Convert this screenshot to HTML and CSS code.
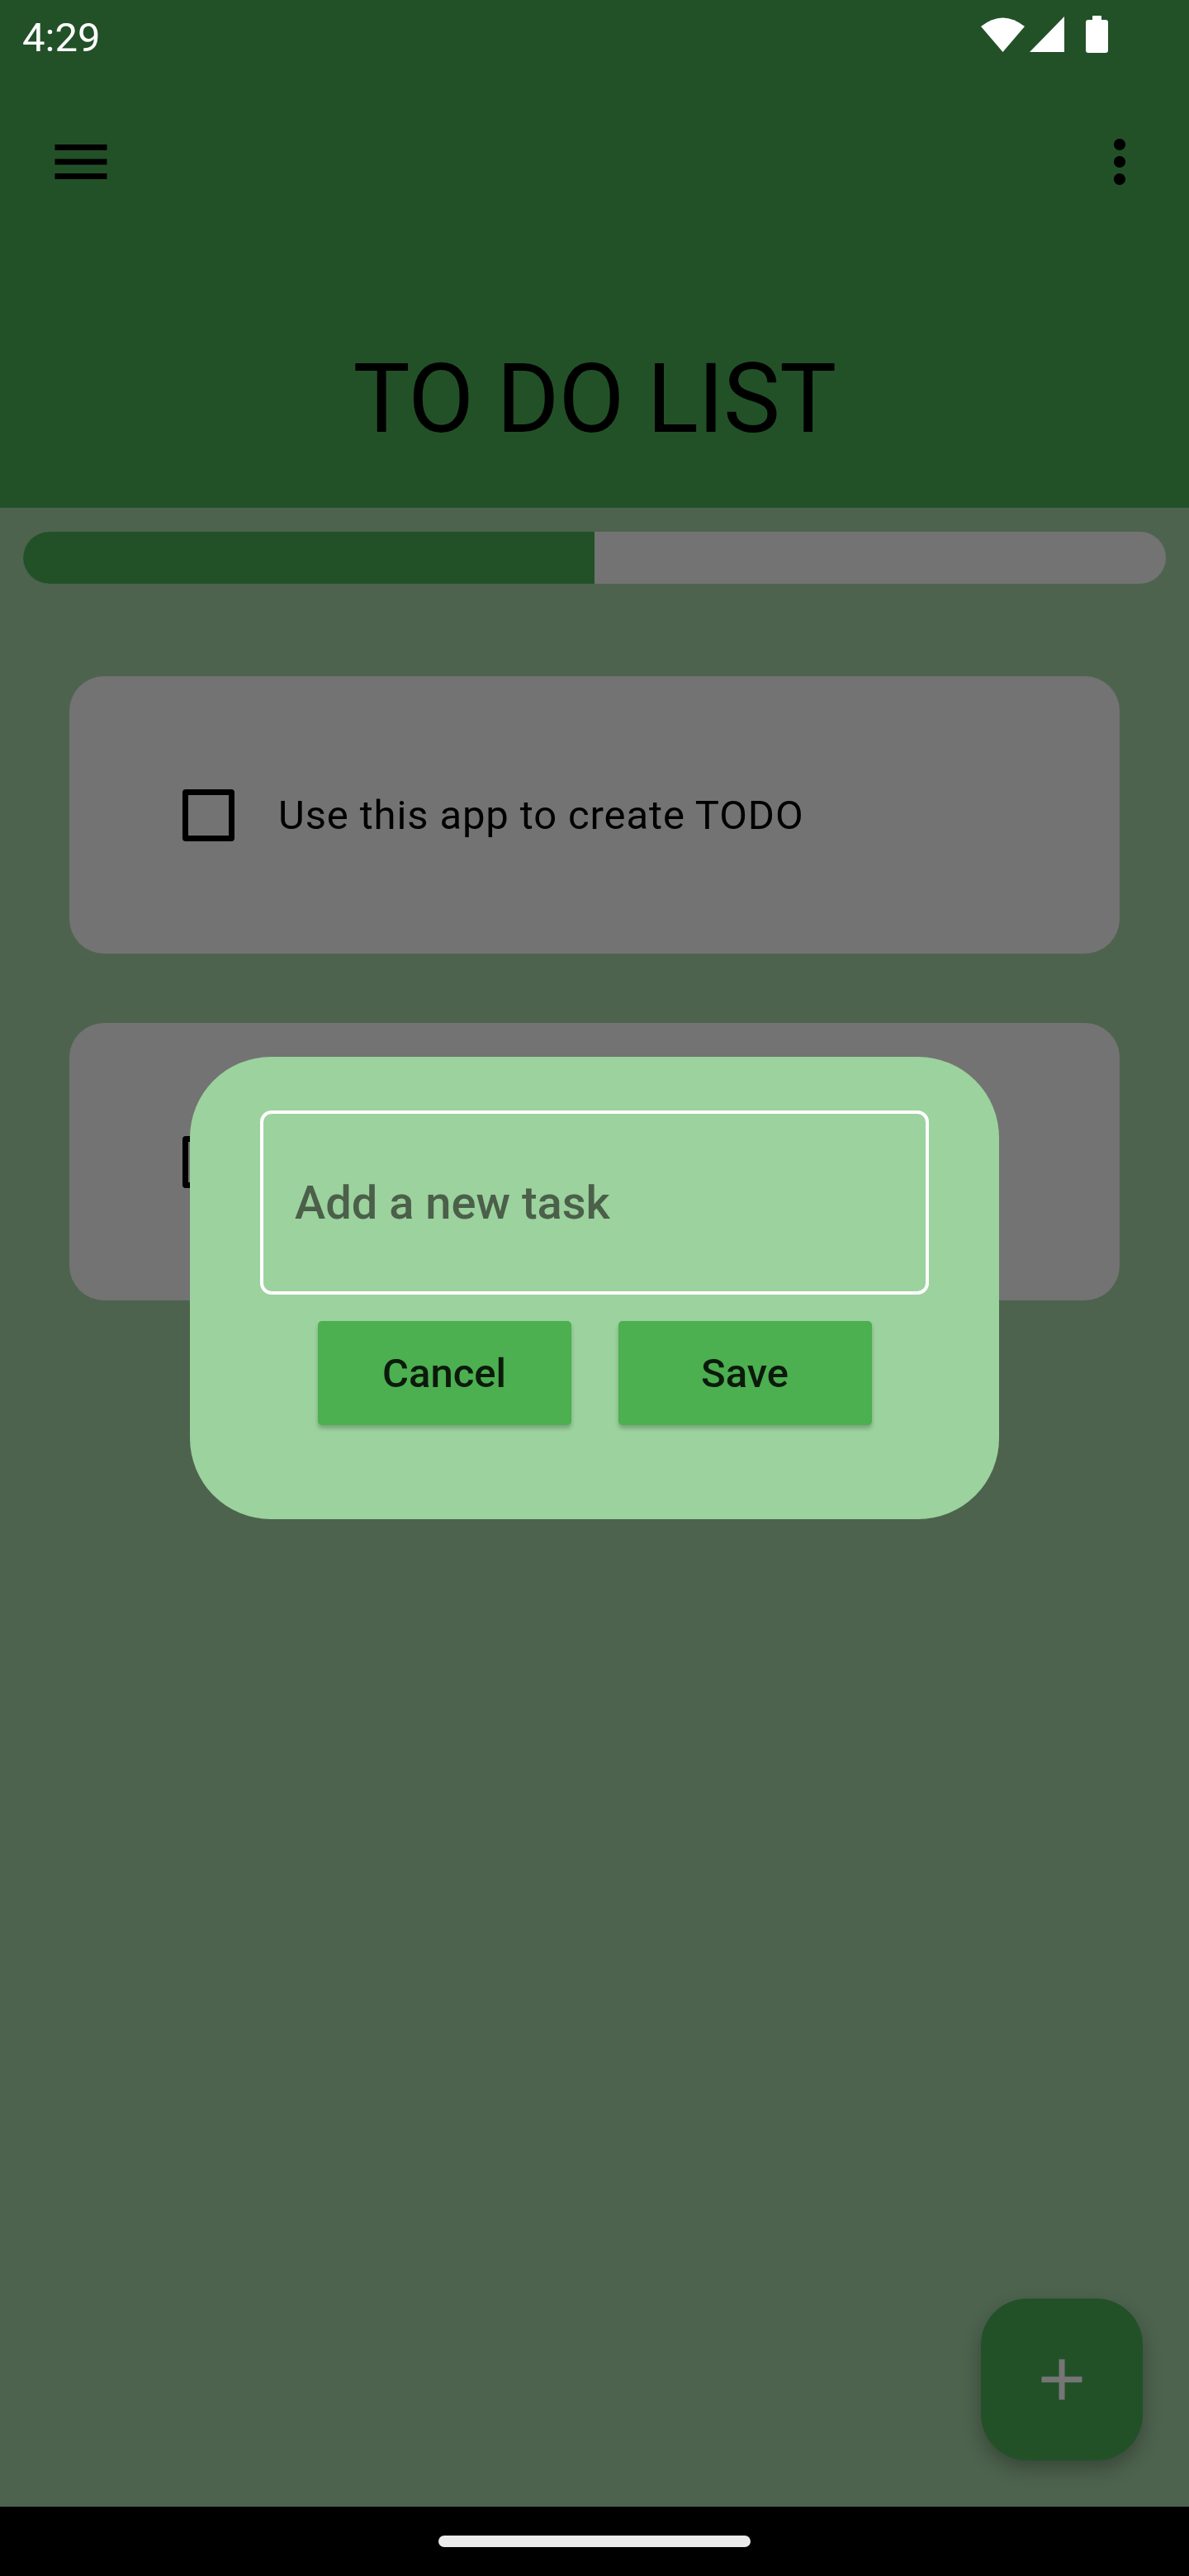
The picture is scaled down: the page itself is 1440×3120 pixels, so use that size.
FILE: index.html
```html
<!DOCTYPE html>
<html lang="en">
<head>
<meta charset="utf-8">
<title>TO DO LIST</title>
<link rel="stylesheet" href="styles.css">
</head>
<body>
<div class="screen">
  <header class="appbar">
    <div class="status">
      <span class="time">4:29</span>
      <svg class="sys-icons" width="154" height="46" viewBox="0 0 154 46">
        <path d="M26.5 44 L0 13 Q26.5 -8 53 13 Z" fill="#fff"/>
        <polygon points="101,1 101,44 59,44" fill="#fff"/>
        <rect x="127" y="5" width="27" height="40" rx="3" fill="#fff"/>
        <rect x="135" y="0" width="11" height="7" rx="1" fill="#fff"/>
      </svg>
    </div>
    <div class="toolbar">
      <svg class="tb-icon" width="84" height="84" viewBox="0 0 24 24"><path d="M3 18h18v-2H3v2zm0-5h18v-2H3v2zm0-7v2h18V6H3z" fill="#000"/></svg>
      <svg class="tb-icon" width="84" height="84" viewBox="0 0 24 24"><path d="M12 8c1.1 0 2-.9 2-2s-.9-2-2-2-2 .9-2 2 .9 2 2 2zm0 2c-1.1 0-2 .9-2 2s.9 2 2 2 2-.9 2-2-.9-2-2-2zm0 6c-1.1 0-2 .9-2 2s.9 2 2 2 2-.9 2-2-.9-2-2-2z" fill="#000"/></svg>
    </div>
    <h1 class="title">TO DO LIST</h1>
  </header>

  <main class="content">
    <div class="progress"><div class="progress-fill" style="width:50%"></div></div>
    <div class="tasks">
      <div class="task-card">
        <span class="checkbox"></span>
        <span class="task-text">Use this app to create TODO</span>
      </div>
      <div class="task-card">
        <span class="checkbox"></span>
        <span class="task-text">Use this app to create TODO</span>
      </div>
    </div>
  </main>

  <nav class="navbar"><span class="handle"></span></nav>

  <div class="dialog">
    <div class="field"><span class="placeholder">Add a new task</span></div>
    <div class="actions">
      <button class="btn">Cancel</button>
      <button class="btn">Save</button>
    </div>
  </div>

  <button class="fab">
    <svg width="84" height="84" viewBox="0 0 24 24"><path d="M19 13h-6v6h-2v-6H5v-2h6V5h2v6h6v2z" fill="#767676"/></svg>
  </button>
</div>
</body>
</html>
```

FILE: styles.css
```css
* { box-sizing: border-box; }
html, body { margin: 0; padding: 0; }
body {
  width: 1440px;
  height: 3120px;
  font-family: Roboto, "Liberation Sans", sans-serif;
  background: #4d634e;
  overflow: hidden;
}
.screen {
  position: relative;
  width: 1440px;
  height: 3120px;
  display: flex;
  flex-direction: column;
}
.appbar {
  height: 615px;
  background: #225128;
  flex: none;
}
.status {
  height: 98px;
  display: flex;
  justify-content: space-between;
  align-items: flex-start;
  padding: 0 98px 0 27px;
}
.time {
  color: #fff;
  font-size: 49px;
  line-height: 49px;
  margin-top: 21px;
}
.sys-icons { margin-top: 19px; display: block; }
.toolbar {
  height: 196px;
  display: flex;
  justify-content: space-between;
  align-items: center;
  padding: 0 42px 0 56px;
}
.tb-icon { display: block; }
.title {
  margin: 0;
  padding-top: 131px;
  font-size: 116px;
  line-height: 116px;
  font-weight: 400;
  letter-spacing: -0.8px;
  text-align: center;
  color: #000;
}
.content {
  flex: 1;
}
.progress {
  margin: 29px 28px 0;
  height: 63px;
  border-radius: 32px;
  background: #737373;
  overflow: hidden;
}
.progress-fill {
  height: 100%;
  background: #225128;
}
.tasks {
  padding: 112px 84px 0;
  display: flex;
  flex-direction: column;
  gap: 84px;
}
.task-card {
  height: 336px;
  background: #737373;
  border-radius: 42px;
  display: flex;
  align-items: center;
  padding-left: 137px;
}
.checkbox {
  width: 63px;
  height: 63px;
  border: 7px solid #000;
  border-radius: 4px;
  flex: none;
}
.task-text {
  margin-left: 53px;
  font-size: 49px;
  color: #000;
  letter-spacing: 0.875px;
}
.navbar {
  height: 84px;
  background: #000;
  display: flex;
  justify-content: center;
  align-items: center;
  flex: none;
}
.handle {
  width: 378px;
  height: 14px;
  border-radius: 7px;
  background: #ebebeb;
}
.dialog {
  position: absolute;
  left: 230px;
  top: 1280px;
  width: 980px;
  height: 560px;
  border-radius: 98px;
  background: #9cd29d;
  padding: 65px 85px 0;
}
.field {
  height: 223px;
  border: 4px solid #fff;
  border-radius: 14px;
  display: flex;
  align-items: center;
  padding-left: 38px;
}
.placeholder {
  font-size: 56px;
  font-weight: 500;
  color: #4b5f4a;
}
.actions {
  margin-top: 32px;
  display: flex;
  justify-content: center;
  gap: 57px;
}
.btn {
  width: 307px;
  height: 126px;
  border: none;
  border-radius: 5px;
  background: #4caf50;
  box-shadow: 0 4px 5px rgba(0, 0, 0, 0.22);
  font-family: Roboto, "Liberation Sans", sans-serif;
  font-size: 49px;
  font-weight: 500;
  color: #0c1a0c;
  padding: 0;
}
.fab {
  position: absolute;
  right: 56px;
  top: 2784px;
  width: 196px;
  height: 196px;
  border: none;
  border-radius: 56px;
  background: #225128;
  box-shadow: 0 10px 22px rgba(0, 0, 0, 0.28);
  display: flex;
  justify-content: center;
  align-items: center;
  padding: 0;
}
```
